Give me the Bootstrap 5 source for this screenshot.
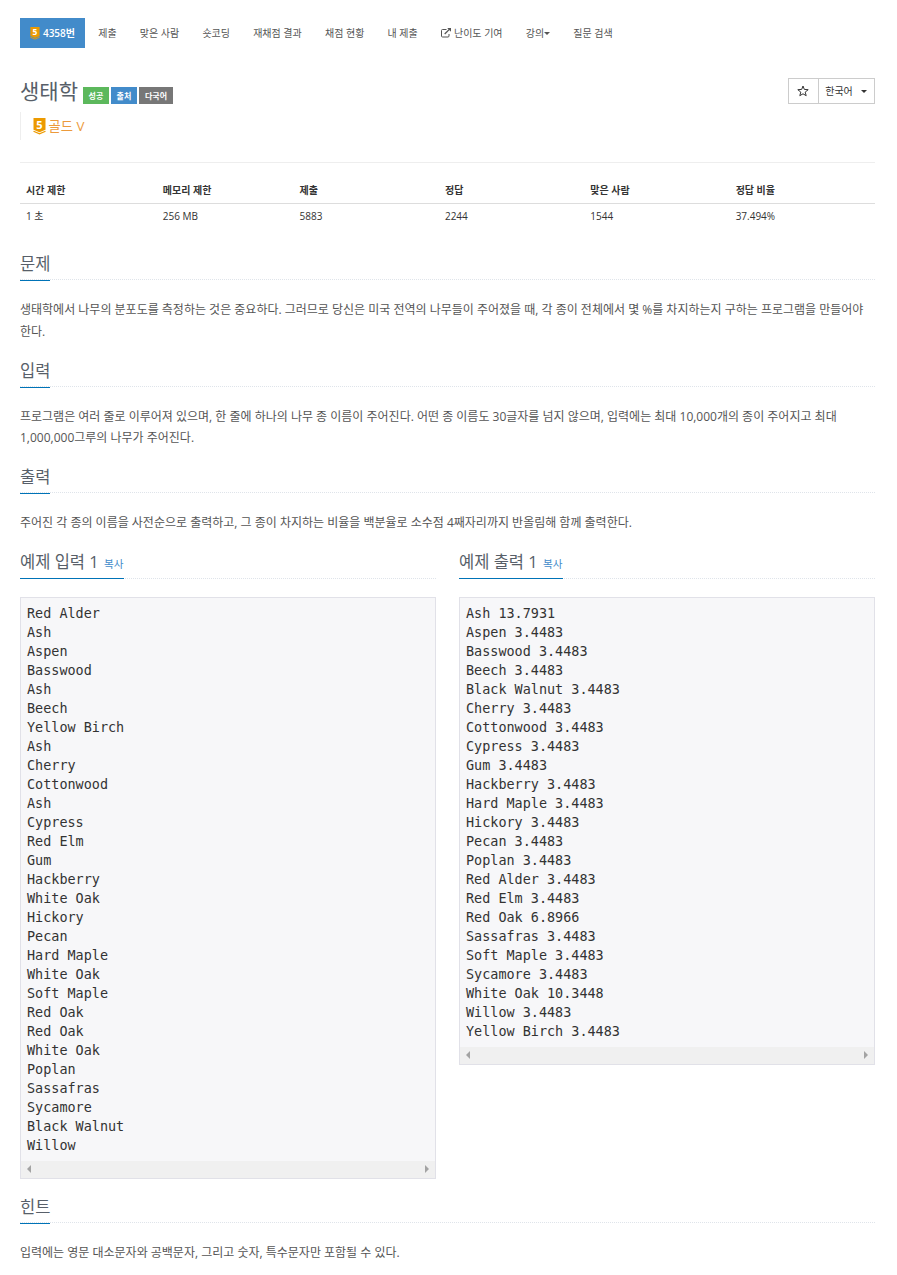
<!DOCTYPE html>
<html lang="ko">
<head>
<meta charset="utf-8">
<meta name="viewport" content="width=device-width, initial-scale=1">
<title>4358번: 생태학</title>
<link rel="stylesheet" href="https://cdn.jsdelivr.net/npm/bootstrap@5.3.0/dist/css/bootstrap.min.css">
<style>
body{font-family:"Open Sans","Noto Sans CJK KR",sans-serif;font-size:12px;color:#555;background:#fff;line-height:21.5px;overflow-x:hidden}
a{text-decoration:none}
.page{width:855px;margin-left:20px;padding-top:18px}
.menu{gap:3.2px;font-size:10px;height:30px}
.menu .nav-link{padding:0 10px;line-height:30px;color:#555;white-space:nowrap;font-weight:400;border-radius:0;display:flex;align-items:center}
.menu .nav-link.active{background:#428bca;color:#fff;font-weight:600;width:65px}
.menu svg{margin-right:3px}
.tier text{font:700 11px "Open Sans",sans-serif;fill:#fff;text-anchor:middle}
.tri{display:inline-block;border:3px solid transparent;border-top-color:currentColor;border-bottom:0}
.title-row{margin-top:30px;height:34px}
.title{font-size:21px;line-height:26px;color:#585f69;margin:0 5px 0 0;font-weight:400}
.tag{font-size:8px;font-weight:700;line-height:17px;height:17px;padding:0;border-radius:0;color:#fff;text-align:center;white-space:nowrap}
.tag-ok{background:#5cb85c;width:26px}.tag-src{background:#428bca;width:26px}.tag-lang{background:#777;width:34px}
.tools .btn{border:1px solid #ccc;border-radius:0;background:#fff;color:#333;font-size:10px;height:26px;padding:0 1px 0 0;line-height:24px}
.level{border-left:1px solid #eee;height:28px;padding-left:11.5px;font-size:13.3px;color:#ec9a3c;line-height:28px}
.level svg{margin-right:3px}
.rule{border-top:1px solid #eee;margin-top:22px}
.info{margin:13px 0 0;font-size:10px;table-layout:fixed;color:#333;line-height:14px;--bs-table-color:#333;--bs-table-bg:transparent}
.info>thead>tr>th,.info>tbody>tr>td{padding:6px;border:0}
.info>tbody>tr>td{padding:5px 6px 7px}
.info>thead>tr>th{border-bottom:1px solid #ddd;font-weight:700;height:27px}
.headline{border-bottom:1px dotted #dfe4ea;height:33.1px;margin-bottom:18.9px}
.headline h2{display:inline-block;margin:0;font-size:16.5px;line-height:33px;height:34px;border-bottom:1px solid #0073b7;color:#585f69;font-weight:400;white-space:nowrap;vertical-align:top}
.headline h2 a{font-size:10.6px;color:#428bca;margin-left:1px}
.txt{margin:0 0 11.6px}
.txt.wide{white-space:nowrap}
.sample{border:1px solid #e1e1e8;background:#f7f7f9;color:#333}
.sample pre{margin:0;padding:6px;font:13.46px/19px "DejaVu Sans Mono",monospace;overflow:hidden}
.bar{height:17px;background:#f0f0f0;padding:0 6px}
.bar i{border:4px solid transparent}
.bar i:first-child{border-right-color:#a3a3a3;border-left:0}
.bar i:last-child{border-left-color:#a3a3a3;border-right:0}
.pair{gap:23px}.pair>div{width:416px}
.pair .headline{height:33.7px;margin-bottom:17.6px}
.pair h2{height:33.7px}
</style>
</head>
<body>
<div class="page">
<nav class="nav menu flex-nowrap">
<a class="nav-link active" href="#"><svg class="tier" width="10" height="13" viewBox="0 0 13 17"><path fill="#ec9a00" d="M.5 0h12v11.7l-6 2.6-6-2.6z"/><path fill="none" stroke="#ec9a00" stroke-width="1.2" d="M.5 13.2l6 2.7 6-2.7"/><text x="6.5" y="10.6">5</text></svg>4358번</a>
<a class="nav-link" href="#">제출</a>
<a class="nav-link" href="#">맞은 사람</a>
<a class="nav-link" href="#">숏코딩</a>
<a class="nav-link" href="#">재채점 결과</a>
<a class="nav-link" href="#">채점 현황</a>
<a class="nav-link" href="#">내 제출</a>
<a class="nav-link" href="#"><svg width="10" height="10" viewBox="0 0 10 10" fill="none" stroke="#555"><path d="M5.5 1.5h-4a1 1 0 0 0-1 1v5.5a1 1 0 0 0 1 1H7a1 1 0 0 0 1-1V6"/><path stroke-width="1.3" d="M3.7 6L8.6 1.1"/><path fill="#555" stroke="none" d="M6.2 0H10v3.8z"/></svg>난이도 기여</a>
<a class="nav-link" href="#">강의<i class="tri"></i></a>
<a class="nav-link" href="#">질문 검색</a>
</nav>

<header>
<div class="title-row d-flex justify-content-between align-items-start">
<div class="d-flex align-items-end">
<h1 class="title">생태학</h1>
<div class="d-flex" style="gap:2px"><span class="tag tag-ok">성공</span><span class="tag tag-src">출처</span><span class="tag tag-lang">다국어</span></div>
</div>
<div class="tools btn-group">
<button class="btn d-flex align-items-center justify-content-center" style="width:31px"><svg width="12" height="12" viewBox="0 0 12 12" fill="none" stroke="#333" stroke-width="1"><path d="M6 1l1.3 3.4 3.9.3-3 2.4 1 3.6L6 8.8l-3.2 1.9 1-3.6-3-2.4 3.9-.3z"/></svg></button>
<button class="btn d-flex align-items-center justify-content-center gap-2" style="width:57px">한국어 <i class="tri"></i></button>
</div>
</div>
<div class="level d-flex align-items-center"><svg class="tier" width="13" height="17" viewBox="0 0 13 17"><path fill="#ec9a00" d="M.5 0h12v11.7l-6 2.6-6-2.6z"/><path fill="none" stroke="#ec9a00" stroke-width="1.2" d="M.5 13.2l6 2.7 6-2.7"/><text x="6.5" y="10.6">5</text></svg>골드 V</div>
</header>
<div class="rule"></div>
<table class="table info">
<colgroup><col style="width:16%"><col style="width:16%"><col style="width:17%"><col style="width:17%"><col style="width:17%"><col style="width:17%"></colgroup>
<thead><tr><th>시간 제한</th><th>메모리 제한</th><th>제출</th><th>정답</th><th>맞은 사람</th><th>정답 비율</th></tr></thead>
<tbody><tr><td>1 초</td><td>256 MB</td><td>5883</td><td>2244</td><td>1544</td><td>37.494%</td></tr></tbody>
</table>

<main style="padding-top:17.6px">
<section><div class="headline"><h2>문제</h2></div>
<p class="txt wide">생태학에서 나무의 분포도를 측정하는 것은 중요하다. 그러므로 당신은 미국 전역의 나무들이 주어졌을 때, 각 종이 전체에서 몇 %를 차지하는지 구하는 프로그램을 만들어야<br>한다.</p></section>
<section><div class="headline"><h2>입력</h2></div>
<p class="txt wide">프로그램은 여러 줄로 이루어져 있으며, 한 줄에 하나의 나무 종 이름이 주어진다. 어떤 종 이름도 30글자를 넘지 않으며, 입력에는 최대 10,000개의 종이 주어지고 최대<br>1,000,000그루의 나무가 주어진다.</p></section>
<section><div class="headline"><h2>출력</h2></div>
<p class="txt">주어진 각 종의 이름을 사전순으로 출력하고, 그 종이 차지하는 비율을 백분율로 소수점 4째자리까지 반올림해 함께 출력한다.</p></section>
<div class="pair d-flex align-items-start">
<div><div class="headline"><h2>예제 입력 1 <a href="#">복사</a></h2></div>
<div class="sample"><pre>Red Alder
Ash
Aspen
Basswood
Ash
Beech
Yellow Birch
Ash
Cherry
Cottonwood
Ash
Cypress
Red Elm
Gum
Hackberry
White Oak
Hickory
Pecan
Hard Maple
White Oak
Soft Maple
Red Oak
Red Oak
White Oak
Poplan
Sassafras
Sycamore
Black Walnut
Willow</pre><div class="bar d-flex justify-content-between align-items-center"><i></i><i></i></div></div></div>
<div><div class="headline"><h2>예제 출력 1 <a href="#">복사</a></h2></div>
<div class="sample"><pre>Ash 13.7931
Aspen 3.4483
Basswood 3.4483
Beech 3.4483
Black Walnut 3.4483
Cherry 3.4483
Cottonwood 3.4483
Cypress 3.4483
Gum 3.4483
Hackberry 3.4483
Hard Maple 3.4483
Hickory 3.4483
Pecan 3.4483
Poplan 3.4483
Red Alder 3.4483
Red Elm 3.4483
Red Oak 6.8966
Sassafras 3.4483
Soft Maple 3.4483
Sycamore 3.4483
White Oak 10.3448
Willow 3.4483
Yellow Birch 3.4483</pre><div class="bar d-flex justify-content-between align-items-center"><i></i><i></i></div></div></div>
</div>
<section style="padding-top:11.4px"><div class="headline"><h2>힌트</h2></div>
<p class="txt mb-0">입력에는 영문 대소문자와 공백문자, 그리고 숫자, 특수문자만 포함될 수 있다.</p></section>
</main>
</div>
<script src="https://cdn.jsdelivr.net/npm/bootstrap@5.3.0/dist/js/bootstrap.bundle.min.js"></script>
</body>
</html>
